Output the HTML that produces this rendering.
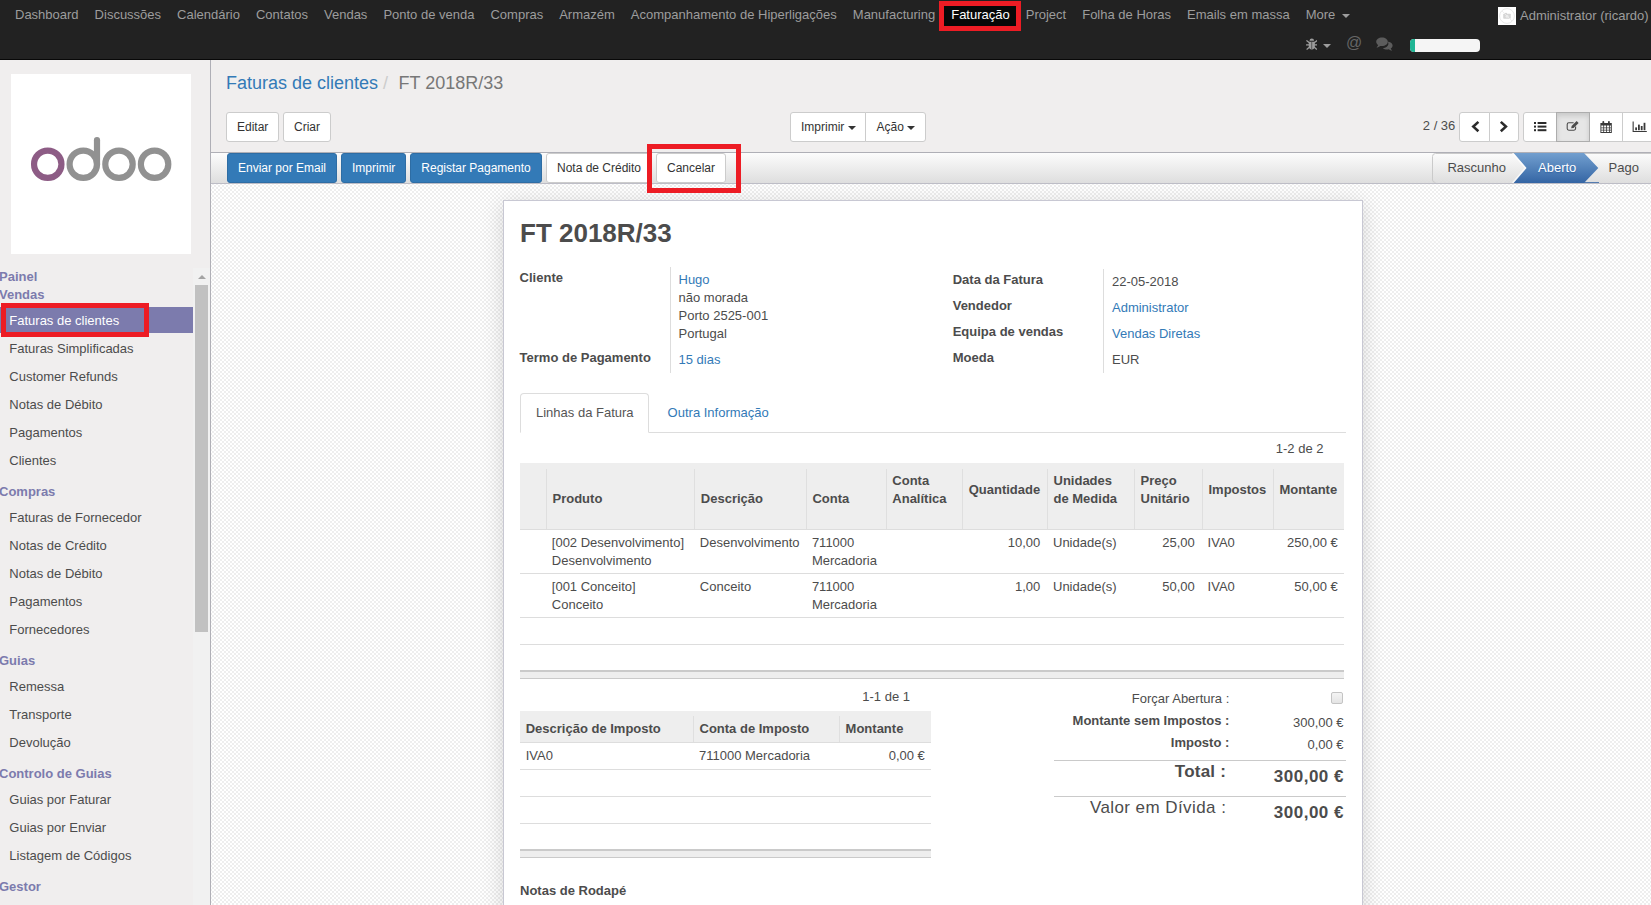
<!DOCTYPE html>
<html lang="pt">
<head>
<meta charset="utf-8">
<title>FT 2018R/33 - Odoo</title>
<style>
*{box-sizing:border-box;margin:0;padding:0}
html,body{width:1651px;height:905px;overflow:hidden}
body{position:relative;font-family:"Liberation Sans",Arial,sans-serif;font-size:13px;line-height:18px;color:#4c4c4c;background:#f0eeee}
a{color:#337ab7;text-decoration:none}
.abs{position:absolute}
/* ---------- top navbar ---------- */
#nav{position:absolute;left:0;top:0;width:1651px;height:60px;background:#222222;border-bottom:1px solid #080808}
#nav .mi{position:absolute;top:5px;height:20px;line-height:20px;font-size:13px;color:#9d9d9d;white-space:nowrap}
#nav .act{position:absolute;left:943px;top:1px;width:74px;height:29px;background:#080808}
#nav .caret{display:inline-block;width:0;height:0;border-left:4px solid transparent;border-right:4px solid transparent;border-top:4px solid #9d9d9d;vertical-align:middle;margin-left:3px}
.redbox{position:absolute;border:5px solid #ed1c24;z-index:20}
/* ---------- sidebar ---------- */
#side{position:absolute;left:0;top:60px;width:211px;height:845px;background:#f0eeee;border-right:1px solid #afafb6}
#logo{position:absolute;left:11px;top:14px;width:180px;height:180px;background:#fff}
#side .h{position:absolute;left:0;font-weight:bold;color:#7c7bad;font-size:13px;line-height:18px;white-space:nowrap}
#side .i{position:absolute;left:9px;color:#4c4c4c;font-size:13px;line-height:18px;white-space:nowrap}
#side .sel{position:absolute;left:0;top:247px;width:193px;height:26px;background:#7c7bad}
#sb{position:absolute;left:193px;top:208px;width:17px;height:637px;background:#f1f1f1}
#sb .th{position:absolute;left:2px;top:17px;width:13px;height:347px;background:#c1c1c1}
#sb .up{position:absolute;left:4.5px;top:6.5px;width:0;height:0;border-left:4px solid transparent;border-right:4px solid transparent;border-bottom:4px solid #a3a3a3}
/* ---------- control panel ---------- */
#cp{position:absolute;left:211px;top:60px;width:1440px;height:93px;background:#f0eeee;border-bottom:1px solid #afafb6}
.bc{position:absolute;top:11px;font-size:18px;line-height:24px;white-space:nowrap}
.btn{position:absolute;height:30px;line-height:18px;padding:5px 10px;font-size:12px;border:1px solid #ccc;border-radius:3px;background:#fff;color:#333;white-space:nowrap;text-align:center}
.btn.pri{background:#337ab7;border-color:#2e6da4;color:#fff}
.btn .caret{display:inline-block;width:0;height:0;border-left:4px solid transparent;border-right:4px solid transparent;border-top:4px solid #333;vertical-align:middle;margin-left:0}
/* ---------- status bar ---------- */
#st{position:absolute;left:211px;top:153px;width:1440px;height:31px;border-bottom:1px solid #bdbdc6;background:linear-gradient(to bottom,#fcfcfc,#dedede)}
/* ---------- sheet bg ---------- */
#bg{position:absolute;left:211px;top:184px;width:1440px;height:721px;background-color:#fff;background-image:conic-gradient(#eee 25%,#fff 0 50%,#eee 0 75%,#fff 0);background-size:4px 4px;background-position:1px 1px}
#sheet{position:absolute;left:503px;top:200px;width:860px;height:720px;background:#fff;border:1px solid #c8c8d3;box-shadow:0 4px 20px rgba(0,0,0,0.15)}
.t{position:absolute;white-space:nowrap;line-height:18px}
.b{font-weight:bold}
.r{text-align:right}
.hl{position:absolute;height:1px;background:#ddd}
.vl{position:absolute;width:1px;background:#ddd}

#nav .menu{position:absolute;left:7px;top:0;height:30px;white-space:nowrap;font-size:0}
#nav .menu .mi{position:static;display:inline-block;padding:5px 8px;height:30px;font-size:13px;line-height:20px;color:#9d9d9d}
#nav .menu .mi.on{color:#fff}
#nav .avatar{position:absolute;left:1498px;top:7px;width:18px;height:18px;background:#fff}
#nav .user{position:absolute;left:1520px;top:6px;font-size:13px;line-height:20px;color:#9d9d9d;white-space:nowrap}
</style>
</head>
<body>
<div id="nav">
<div class="act"></div>
<div class="menu">
<span class="mi">Dashboard</span>
<span class="mi">Discussões</span>
<span class="mi">Calendário</span>
<span class="mi">Contatos</span>
<span class="mi">Vendas</span>
<span class="mi">Ponto de venda</span>
<span class="mi">Compras</span>
<span class="mi">Armazém</span>
<span class="mi">Acompanhamento de Hiperligações</span>
<span class="mi">Manufacturing</span>
<span class="mi on">Faturação</span>
<span class="mi">Project</span>
<span class="mi">Folha de Horas</span>
<span class="mi">Emails em massa</span>
<span class="mi">More <i class="caret"></i></span>
</div>
<div class="avatar"><svg width="18" height="18" viewBox="0 0 18 18"><circle cx="9" cy="9" r="7.4" fill="none" stroke="#e4e4e4" stroke-width="0.9"/><rect x="5.2" y="6.7" width="7.6" height="5" rx="0.8" fill="#d6d6d6"/><rect x="6.4" y="5.9" width="2.6" height="1.4" fill="#d6d6d6"/><circle cx="9" cy="9.2" r="1.5" fill="#ececec"/><path d="M4 4 L14 14" stroke="#ececec" stroke-width="0.9"/></svg></div>
<div class="user">Administrator (ricardo)</div>
<svg class="abs" style="left:1305.6px;top:38px" width="11.6" height="12.2" viewBox="0 0 13 14">
<g fill="none" stroke="#9d9d9d" stroke-width="1.5" stroke-linecap="round"><path d="M0.8 3.2 L3.4 5.2 M12.2 3.2 L9.6 5.2 M0.4 8 H3.2 M12.6 8 H9.8 M1 12.8 L3.6 10.6 M12 12.8 L9.4 10.6"/></g>
<path d="M3.9 3.2 A2.6 2.6 0 0 1 9.1 3.2 Z" fill="#9d9d9d"/>
<path d="M3 4.2 H10 V9.3 A3.5 3.9 0 0 1 3 9.3 Z" fill="#9d9d9d"/>
<rect x="6.1" y="4.6" width="0.8" height="8" fill="#3a3a3a"/></svg>
<i class="caret abs" style="left:1323px;top:44px;margin:0;border-top-color:#9d9d9d"></i>
<div class="abs" style="left:1346px;top:33px;font-size:16px;line-height:20px;color:#666">@</div>
<svg class="abs" style="left:1376px;top:37px" width="17" height="14" viewBox="0 0 17 14">
<path d="M11.2 4.6 C14 4.9 16.6 6.3 16.6 8.6 C16.6 9.9 15.8 10.9 14.7 11.6 C14.9 12.4 15.5 13 16.2 13.6 C14.9 13.6 13.7 13.1 12.8 12.3 C12.2 12.4 11.6 12.5 11 12.5 C9.3 12.5 7.8 12 6.8 11.2 C10 10.8 12.4 8.9 12.4 6.4 C12.4 5.7 12 5.1 11.2 4.6 Z" fill="#5c5c5c"/>
<path d="M6 0.5 C9.3 0.5 11.8 2.4 11.8 4.8 C11.8 7.2 9.3 9.1 6 9.1 C5.4 9.1 4.8 9 4.3 8.9 C3.3 9.8 2 10.4 0.5 10.4 C1.3 9.7 1.9 9 2.2 8.1 C1 7.3 0.2 6.1 0.2 4.8 C0.2 2.4 2.7 0.5 6 0.5 Z" fill="#5c5c5c"/></svg>
<div class="abs" style="left:1410px;top:39px;width:70px;height:13px;border-radius:4px;background:#f5f5f5;overflow:hidden"><div style="width:5px;height:13px;background:#1fb594"></div></div>
</div>
<div id="side">
<div id="logo"><svg width="180" height="180" viewBox="11 74 180 180">
<g fill="none" stroke-width="6.2">
<circle cx="47.75" cy="164.25" r="13.7" stroke="#8d5c85"/>
<circle cx="83.3" cy="164.25" r="13.7" stroke="#919191"/>
<circle cx="119" cy="164.25" r="13.7" stroke="#919191"/>
<circle cx="154.6" cy="164.25" r="13.7" stroke="#919191"/>
<path d="M97 140.2 V164.25" stroke="#919191" stroke-linecap="round"/>
</g></svg></div>
<div class="sel"></div>
<div class="t h" style="top:208.00px;left:-1px;">Painel</div>
<div class="t h" style="top:226.00px;left:-1px;">Vendas</div>
<div class="t h" style="top:423.00px;left:-1px;">Compras</div>
<div class="t h" style="top:592.00px;left:-1px;">Guias</div>
<div class="t h" style="top:705.00px;left:-1px;">Controlo de Guias</div>
<div class="t h" style="top:818.00px;left:-1px;">Gestor</div>
<div class="t i" style="top:252.00px;left:9.3px;color:#fff;">Faturas de clientes</div>
<div class="t i" style="top:280.00px;left:9.3px;">Faturas Simplificadas</div>
<div class="t i" style="top:308.00px;left:9.3px;">Customer Refunds</div>
<div class="t i" style="top:336.00px;left:9.3px;">Notas de Débito</div>
<div class="t i" style="top:364.00px;left:9.3px;">Pagamentos</div>
<div class="t i" style="top:392.00px;left:9.3px;">Clientes</div>
<div class="t i" style="top:449.00px;left:9.3px;">Faturas de Fornecedor</div>
<div class="t i" style="top:477.00px;left:9.3px;">Notas de Crédito</div>
<div class="t i" style="top:505.00px;left:9.3px;">Notas de Débito</div>
<div class="t i" style="top:533.00px;left:9.3px;">Pagamentos</div>
<div class="t i" style="top:561.00px;left:9.3px;">Fornecedores</div>
<div class="t i" style="top:618.00px;left:9.3px;">Remessa</div>
<div class="t i" style="top:646.00px;left:9.3px;">Transporte</div>
<div class="t i" style="top:674.00px;left:9.3px;">Devolução</div>
<div class="t i" style="top:731.00px;left:9.3px;">Guias por Faturar</div>
<div class="t i" style="top:759.00px;left:9.3px;">Guias por Enviar</div>
<div class="t i" style="top:787.00px;left:9.3px;">Listagem de Códigos</div>
<div id="sb"><div class="up"></div><div class="th"></div></div>
</div>
<div id="cp">
<div class="bc" style="left:15px"><a>Faturas de clientes</a><span style="color:#ccc;padding:0 10.5px 0 5px">/</span><span style="color:#777">FT 2018R/33</span></div>
<div class="btn " style="left:15px;top:52px;width:53px;">Editar</div>
<div class="btn " style="left:72px;top:52px;width:48px;">Criar</div>
<div class="btn " style="left:579px;top:52px;width:76px;border-radius:3px 0 0 3px;text-align:left">Imprimir <i class="caret"></i></div>
<div class="btn " style="left:654px;top:52px;width:61px;border-radius:0 3px 3px 0;text-align:left;padding-left:10.6px">Ação <i class="caret"></i></div>
<div class="t" style="top:56.80px;left:1211.8px;">2 / 36</div>
<div class="btn " style="left:1248px;top:52px;width:31px;border-radius:3px 0 0 3px"></div>
<div class="btn " style="left:1278px;top:52px;width:30px;border-radius:0 3px 3px 0"></div>
<svg class="abs" style="left:1249px;top:52px" width="59" height="30" viewBox="1460 112 59 30"><g fill="none" stroke="#2b2b2b" stroke-width="2.6"><path d="M1478.4 121.9 L1473.3 126.6 L1478.4 131.3"/><path d="M1500.8 121.9 L1505.9 126.6 L1500.8 131.3"/></g></svg>
<div class="btn " style="left:1312px;top:52px;width:34px;border-radius:3px 0 0 3px"></div>
<div class="btn " style="left:1345px;top:52px;width:34px;border-radius:0;background:#e6e6e6;border-color:#adadad;box-shadow:inset 0 3px 5px rgba(0,0,0,0.125);z-index:2"></div>
<div class="btn " style="left:1378px;top:52px;width:34px;border-radius:0"></div>
<div class="btn " style="left:1411px;top:52px;width:34px;border-radius:0"></div>
<svg class="abs" style="left:1313px;top:52px;z-index:3" width="127" height="30" viewBox="1524 112 127 30">
<g fill="#2b2b2b">
<rect x="1534" y="122" width="2" height="2"/><rect x="1534" y="125.6" width="2" height="2"/><rect x="1534" y="129.2" width="2" height="2"/>
<rect x="1537.6" y="122" width="8.8" height="2"/><rect x="1537.6" y="125.6" width="8.8" height="2"/><rect x="1537.6" y="129.2" width="8.8" height="2"/>
</g>
<g fill="none" stroke="#4c4c4c" stroke-width="1.1">
<path d="M1575.6 126.6 V128.6 A1.6 1.6 0 0 1 1574 130.2 H1568.8 A1.6 1.6 0 0 1 1567.2 128.6 V124.4 A1.6 1.6 0 0 1 1568.8 122.8 H1573.6"/>
</g>
<path d="M1571.2 128.2 L1571.6 126 L1576.6 121 L1578.6 123 L1573.6 128 Z" fill="#4c4c4c"/>
<g fill="#3a3a3a">
<path d="M1600.4 123 H1611.8 V132.9 H1600.4 Z M1601.3 125.6 V127.4 H1603.3 V125.6 Z M1604.1 125.6 V127.4 H1606.2 V125.6 Z M1607 125.6 V127.4 H1609 V125.6 Z M1609.8 125.6 V127.4 H1610.9 V125.6 Z M1601.3 128.2 V129.8 H1603.3 V128.2 Z M1604.1 128.2 V129.8 H1606.2 V128.2 Z M1607 128.2 V129.8 H1609 V128.2 Z M1609.8 128.2 V129.8 H1610.9 V128.2 Z M1601.3 130.6 V132 H1603.3 V130.6 Z M1604.1 130.6 V132 H1606.2 V130.6 Z M1607 130.6 V132 H1609 V130.6 Z M1609.8 130.6 V132 H1610.9 V130.6 Z" fill-rule="evenodd"/>
<rect x="1602.4" y="121" width="1.8" height="3.4" rx="0.8"/><rect x="1608" y="121" width="1.8" height="3.4" rx="0.8"/>
</g>
<g fill="#3a3a3a">
<path d="M1632.6 121.6 H1633.7 V131 H1646.8 V132 H1632.6 Z"/>
<rect x="1635.2" y="127.4" width="1.8" height="2.8"/><rect x="1638" y="124.6" width="1.8" height="5.6"/><rect x="1640.8" y="126" width="1.8" height="4.2"/><rect x="1643.6" y="122.8" width="1.8" height="7.4"/>
</g></svg>
</div>
<div id="st">
<div class="btn pri" style="left:16px;top:0px;width:110px;">Enviar por Email</div>
<div class="btn pri" style="left:130px;top:0px;width:65px;">Imprimir</div>
<div class="btn pri" style="left:199px;top:0px;width:132px;">Registar Pagamento</div>
<div class="btn " style="left:335px;top:0px;width:106px;">Nota de Crédito</div>
<div class="btn " style="left:445px;top:0px;width:70px;">Cancelar</div>
<svg class="abs" style="left:1221px;top:0" width="219" height="30" viewBox="1432 153 219 30">
<defs><linearGradient id="gb" x1="0" y1="0" x2="0" y2="1"><stop offset="0" stop-color="#729fcf"/><stop offset="1" stop-color="#3465a4"/></linearGradient>
<linearGradient id="gw" x1="0" y1="0" x2="0" y2="1"><stop offset="0" stop-color="#fcfcfc"/><stop offset="1" stop-color="#dedede"/></linearGradient></defs>
<path d="M1435.5 182.5 A3 3 0 0 1 1432.5 180 V156.5 A3 3 0 0 1 1435.5 153.5 H1651" fill="none" stroke="#cacaca" stroke-width="1"/>
<path d="M1513.4 153 H1584 L1598.3 168 L1584 183 H1513.4 L1526.3 168 Z" fill="url(#gb)"/>
<path d="M1512.6 153 L1525.5 168 L1512.6 183" fill="none" stroke="#ffffff" stroke-opacity="0.75" stroke-width="1.6"/>
<path d="M1584 182.6 H1599" stroke="#3465a4" stroke-width="0.9"/>
</svg>
<div class="t" style="top:5.70px;left:1236.4px;">Rascunho</div>
<div class="t" style="top:5.70px;left:1327px;color:#fff;text-shadow:0 1px 1px #3465a4">Aberto</div>
<div class="t" style="top:5.70px;left:1397.6px;">Pago</div>
</div>
<div id="bg"></div>
<div id="sheet">
<div class="t b" style="top:16.89px;left:16px;font-size:26px;line-height:30px;">FT 2018R/33</div>
<div class="t b" style="top:68.00px;left:15.600000000000023px;">Cliente</div>
<div class="t" style="top:70.10px;left:174.5px;"><a>Hugo</a></div>
<div class="t" style="top:88.10px;left:174.5px;">não morada</div>
<div class="t" style="top:106.10px;left:174.5px;">Porto 2525-001</div>
<div class="t" style="top:124.10px;left:174.5px;">Portugal</div>
<div class="t b" style="top:148.10px;left:15.600000000000023px;">Termo de Pagamento</div>
<div class="t" style="top:149.90px;left:174.5px;"><a>15 dias</a></div>
<div class="vl" style="left:166px;top:66px;height:106px;background:#ddd"></div>
<div class="t b" style="top:70.30px;left:448.70000000000005px;">Data da Fatura</div>
<div class="t b" style="top:96.30px;left:448.70000000000005px;">Vendedor</div>
<div class="t b" style="top:122.30px;left:448.70000000000005px;">Equipa de vendas</div>
<div class="t b" style="top:148.30px;left:448.70000000000005px;">Moeda</div>
<div class="t" style="top:71.50px;left:608px;">22-05-2018</div>
<div class="t" style="top:97.50px;left:608px;"><a>Administrator</a></div>
<div class="t" style="top:123.50px;left:608px;"><a>Vendas Diretas</a></div>
<div class="t" style="top:149.50px;left:608px;">EUR</div>
<div class="vl" style="left:599px;top:68px;height:104px;background:#ddd"></div>
<div class="hl" style="left:16px;top:231px;width:826px;height:1px;background:#ddd"></div>
<div class="abs" style="left:16px;top:192px;width:129px;height:40px;border:1px solid #ddd;border-bottom-color:#fff;border-radius:4px 4px 0 0;background:#fff"></div>
<div class="t" style="top:203.10px;left:32px;color:#555">Linhas da Fatura</div>
<div class="t" style="top:203.10px;left:163.60000000000002px;"><a>Outra Informação</a></div>
<div class="t" style="top:238.90px;right:38.5px;">1-2 de 2</div>
<div class="abs" style="left:16px;top:262px;width:824px;height:67px;background:#eee;border-bottom:1px solid #ddd"></div>
<div class="vl" style="left:42px;top:268px;height:60px;background:#dfdfdf"></div>
<div class="vl" style="left:190px;top:268px;height:60px;background:#dfdfdf"></div>
<div class="vl" style="left:302px;top:268px;height:60px;background:#dfdfdf"></div>
<div class="vl" style="left:382px;top:268px;height:60px;background:#dfdfdf"></div>
<div class="vl" style="left:458px;top:268px;height:60px;background:#dfdfdf"></div>
<div class="vl" style="left:543px;top:268px;height:60px;background:#dfdfdf"></div>
<div class="vl" style="left:630px;top:268px;height:60px;background:#dfdfdf"></div>
<div class="vl" style="left:698px;top:268px;height:60px;background:#dfdfdf"></div>
<div class="vl" style="left:769px;top:268px;height:60px;background:#dfdfdf"></div>
<div class="t b" style="top:288.50px;left:48.5px;">Produto</div>
<div class="t b" style="top:288.50px;left:196.79999999999995px;">Descrição</div>
<div class="t b" style="top:288.50px;left:308.4px;">Conta</div>
<div class="t b" style="top:270.50px;left:388.29999999999995px;">Conta</div>
<div class="t b" style="top:288.50px;left:388.29999999999995px;">Analítica</div>
<div class="t b" style="top:280.30px;left:464.70000000000005px;">Quantidade</div>
<div class="t b" style="top:270.50px;left:549.5px;">Unidades</div>
<div class="t b" style="top:288.50px;left:549.5px;">de Medida</div>
<div class="t b" style="top:270.50px;left:636.5px;">Preço</div>
<div class="t b" style="top:288.50px;left:636.5px;">Unitário</div>
<div class="t b" style="top:280.30px;left:704.5px;">Impostos</div>
<div class="t b" style="top:280.30px;left:775.4000000000001px;">Montante</div>
<div class="t" style="top:333.30px;left:47.799999999999955px;">[002 Desenvolvimento]</div>
<div class="t" style="top:351.30px;left:47.799999999999955px;">Desenvolvimento</div>
<div class="t" style="top:333.30px;left:195.79999999999995px;">Desenvolvimento</div>
<div class="t" style="top:333.30px;left:307.9px;">711000</div>
<div class="t" style="top:351.30px;left:307.9px;">Mercadoria</div>
<div class="t" style="top:333.30px;right:321.70000000000005px;">10,00</div>
<div class="t" style="top:333.30px;left:549px;">Unidade(s)</div>
<div class="t" style="top:333.30px;right:167.20000000000005px;">25,00</div>
<div class="t" style="top:333.30px;left:703.5999999999999px;">IVA0</div>
<div class="t" style="top:333.30px;right:24.299999999999955px;">250,00 €</div>
<div class="t" style="top:377.30px;left:47.799999999999955px;">[001 Conceito]</div>
<div class="t" style="top:395.30px;left:47.799999999999955px;">Conceito</div>
<div class="t" style="top:377.30px;left:195.79999999999995px;">Conceito</div>
<div class="t" style="top:377.30px;left:307.9px;">711000</div>
<div class="t" style="top:395.30px;left:307.9px;">Mercadoria</div>
<div class="t" style="top:377.30px;right:321.70000000000005px;">1,00</div>
<div class="t" style="top:377.30px;left:549px;">Unidade(s)</div>
<div class="t" style="top:377.30px;right:167.20000000000005px;">50,00</div>
<div class="t" style="top:377.30px;left:703.5999999999999px;">IVA0</div>
<div class="t" style="top:377.30px;right:24.299999999999955px;">50,00 €</div>
<div class="hl" style="left:16px;top:372px;width:824px;height:1px;background:#ddd"></div>
<div class="hl" style="left:16px;top:416px;width:824px;height:1px;background:#ddd"></div>
<div class="hl" style="left:16px;top:443px;width:824px;height:1px;background:#ddd"></div>
<div class="abs" style="left:16px;top:469px;width:824px;height:9px;background:#eee;border-top:2px solid #cacaca;border-bottom:1px solid #cacaca"></div>
<div class="t" style="top:486.90px;right:452px;">1-1 de 1</div>
<div class="abs" style="left:16px;top:510px;width:411px;height:32px;background:#eee;border-bottom:1px solid #ddd"></div>
<div class="vl" style="left:189px;top:515px;height:26px;background:#dfdfdf"></div>
<div class="vl" style="left:335px;top:515px;height:26px;background:#dfdfdf"></div>
<div class="t b" style="top:519.30px;left:21.700000000000045px;">Descrição de Imposto</div>
<div class="t b" style="top:519.30px;left:195.5px;">Conta de Imposto</div>
<div class="t b" style="top:519.30px;left:341.6px;">Montante</div>
<div class="t" style="top:546.30px;left:21.700000000000045px;">IVA0</div>
<div class="t" style="top:546.30px;left:195px;">711000 Mercadoria</div>
<div class="t" style="top:546.30px;right:437.20000000000005px;">0,00 €</div>
<div class="hl" style="left:16px;top:568px;width:411px;height:1px;background:#ddd"></div>
<div class="hl" style="left:16px;top:595px;width:411px;height:1px;background:#ddd"></div>
<div class="hl" style="left:16px;top:622px;width:411px;height:1px;background:#ddd"></div>
<div class="abs" style="left:16px;top:648px;width:411px;height:9px;background:#eee;border-top:2px solid #cacaca;border-bottom:1px solid #cacaca"></div>
<div class="t b" style="top:681.10px;left:16px;">Notas de Rodapé</div>
<div class="t" style="top:489.10px;right:132.70000000000005px;">Forçar Abertura :</div>
<div class="abs" style="left:827px;top:491px;width:12px;height:12px;border:1px solid #c4c4c4;border-radius:2px;background:linear-gradient(#f4f4f4,#e4e4e4)"></div>
<div class="t b" style="top:511.20px;right:132.70000000000005px;">Montante sem Impostos :</div>
<div class="t" style="top:513.10px;right:18.40000000000009px;">300,00 €</div>
<div class="t b" style="top:533.30px;right:132.70000000000005px;">Imposto :</div>
<div class="t" style="top:535.30px;right:18.40000000000009px;">0,00 €</div>
<div class="hl" style="left:550px;top:559px;width:292px;height:1px;background:#cacaca"></div>
<div class="t b" style="top:559.51px;right:136px;font-size:17px;line-height:22px;letter-spacing:0.2px;">Total :</div>
<div class="t b" style="top:564.71px;right:18px;font-size:17px;line-height:22px;letter-spacing:0.5px;">300,00 €</div>
<div class="hl" style="left:550px;top:595px;width:292px;height:1px;background:#cacaca"></div>
<div class="t" style="top:595.91px;right:135.70000000000005px;font-size:17px;line-height:22px;letter-spacing:0.43px;">Valor em Dívida :</div>
<div class="t b" style="top:600.61px;right:18px;font-size:17px;line-height:22px;letter-spacing:0.5px;">300,00 €</div>
</div>
<div class="redbox" style="left:939px;top:1px;width:82px;height:30px"></div>
<div class="redbox" style="left:1px;top:303px;width:148px;height:34px"></div>
<div class="redbox" style="left:647px;top:144px;width:94px;height:49px"></div>

</body>
</html>
